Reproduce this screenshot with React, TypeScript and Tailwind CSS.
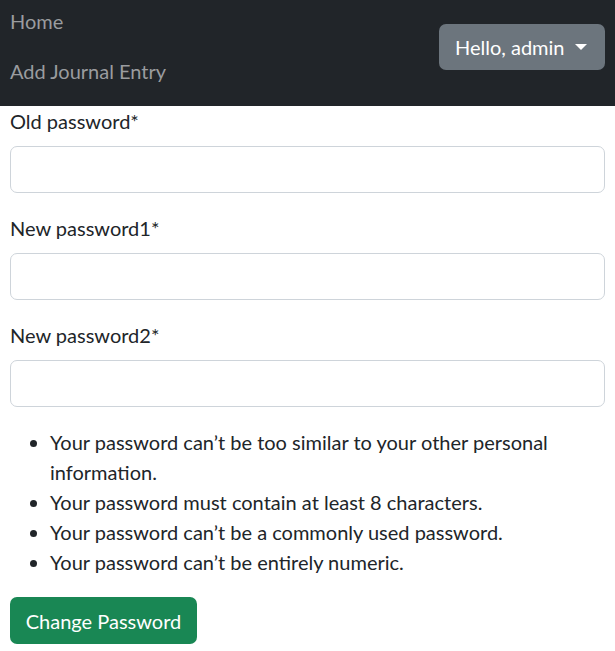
export default function App() {
  const rules = [
    'Your password can’t be too similar to your other personal information.',
    'Your password must contain at least 8 characters.',
    'Your password can’t be a commonly used password.',
    'Your password can’t be entirely numeric.',
  ];

  return (
    <div className="min-h-[651px] bg-white text-[#212529] text-[20px] leading-[30px] font-['Lato',sans-serif]">
      <nav className="bg-[#212529] h-[106px] flex justify-between items-start px-[10px]">
        <ul className="flex flex-col pt-[6px]">
          <li className="pb-[20px]">
            <a href="#" className="text-[#9a9c9f]">Home</a>
          </li>
          <li>
            <a href="#" className="text-[#9a9c9f]">Add Journal Entry</a>
          </li>
        </ul>
        <button className="mt-[24px] h-[46px] w-[166px] flex items-center pl-[16px] bg-[#6c757d] text-white rounded-[7px]">
          Hello, admin
          <span className="ml-[10px] w-0 h-0 border-x-[6px] border-x-transparent border-t-[6px] border-t-white" />
        </button>
      </nav>

      <form className="px-[10px]">
        {['Old password*', 'New password1*', 'New password2*'].map((label) => (
          <div key={label} className="mb-[20px]">
            <label className="block mb-[10px]">{label}</label>
            <input
              type="password"
              className="block w-full h-[47px] border border-[#ced4da] rounded-[7px] px-[15px]"
            />
          </div>
        ))}

        <ul className="list-disc pl-[40px] mb-[20px]">
          {rules.map((r) => (
            <li key={r}>{r}</li>
          ))}
        </ul>

        <button
          type="button"
          className="h-[47px] w-[187px] bg-[#198754] text-white rounded-[7px]"
        >
          Change Password
        </button>
      </form>
    </div>
  );
}
